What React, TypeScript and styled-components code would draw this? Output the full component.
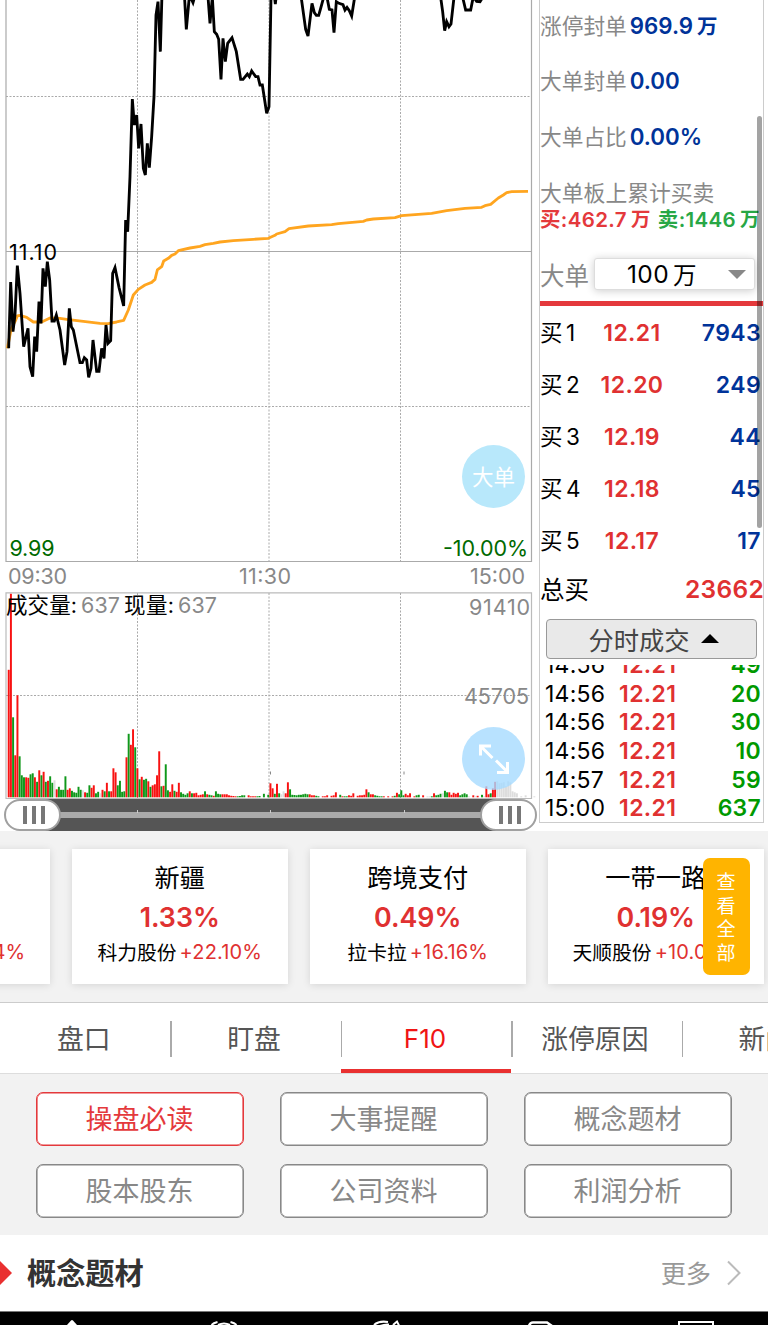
import React from "react";
import styled, { createGlobalStyle } from "styled-components";

const GlobalStyle = createGlobalStyle`
  * { box-sizing: border-box; }
  body {
    margin: 0;
    background: #fff;
    font-family: Inter, "Noto Sans CJK SC", sans-serif;
    color: #000;
    text-autospace: no-autospace;
  }
`;

const Page = styled.div`
  width: 768px;
  height: 1325px;
  overflow: hidden;
  display: flex;
  flex-direction: column;
  background: #fff;
`;

const Quote = styled.section`
  display: flex;
  height: 831px;
  flex: none;
`;

const ChartColumn = styled.div`
  width: 539px;
  flex: none;
  position: relative;
  display: flex;
  flex-direction: column;
`;

const Chart = styled.svg`
  display: block;
  flex: none;
  font-family: Inter, sans-serif;
`;

const RoundButton = styled.button<{ $top: number; $color: string }>`
  position: absolute;
  left: 462px;
  top: ${(p) => p.$top}px;
  width: 63px;
  height: 63px;
  padding: 0 0 2px;
  border: 0;
  border-radius: 50%;
  background: ${(p) => p.$color};
  color: #fff;
  font: 400 21.5px Inter, "Noto Sans CJK SC", sans-serif;
  display: flex;
  align-items: center;
  justify-content: center;
`;

const RangeBar = styled.div`
  height: 32px;
  margin: 0 2px 0 4px;
  background: linear-gradient(#555 13px, #aaa 13px, #aaa 19px, #555 19px) 28px 0 / 477px 32px no-repeat;
  display: flex;
  justify-content: space-between;
  position: relative;
`;

const Handle = styled.span`
  width: 57px;
  height: 32px;
  border: 2px solid #a0a0a0;
  border-radius: 16px;
  background: #fff;
  display: flex;
  align-items: center;
  justify-content: center;
  gap: 5px;
  padding-left: 3px;
`;

const Grip = styled.i`
  width: 4px;
  height: 18px;
  background: #777;
`;

const Tick = styled.i<{ $left: number }>`
  position: absolute;
  left: ${(p) => p.$left}px;
  top: 11px;
  width: 1px;
  height: 3px;
  background: #ccc;
`;

const Panel = styled.aside`
  position: relative;
  width: 225px;
  height: 823px;
  border: 1px solid #ccc;
  border-top: 0;
  display: flex;
  flex-direction: column;
  white-space: nowrap;
`;

const InfoRow = styled.div`
  height: 56px;
  display: flex;
  align-items: center;
  gap: 3px;
  flex: none;
  padding-bottom: 3px;
  font-size: 21.7px;
  color: #888;
`;

const FirstInfo = styled(InfoRow)`
  height: 53px;
  padding-bottom: 4px;
`;

const InfoValue = styled.b`
  color: #039;
  font-weight: 600;
  font-size: 22.3px;
  display: flex;
  align-items: center;
  padding-top: 2px;
`;

const Unit = styled.span<{ $size?: number }>`
  font-size: ${(p) => p.$size ?? 20.5}px;
  margin-left: 4px;
  margin-top: -1px;
`;

const TradeTitle = styled.div`
  height: 26px;
  line-height: 26px;
  margin-top: 15px;
  flex: none;
  font-size: 21.8px;
  color: #888;
`;

const TradeSums = styled.div`
  height: 26px;
  flex: none;
  display: flex;
  align-items: center;
  gap: 7px;
  padding-bottom: 2px;
  font-size: 20.5px;
  letter-spacing: 0.35px;
  font-weight: 600;
`;

const Sum = styled.span<{ $color: string }>`
  display: flex;
  align-items: center;
  color: ${(p) => p.$color};
`;

const FilterRow = styled.div`
  height: 69px;
  flex: none;
  display: flex;
  align-items: center;
  padding-top: 15px;
  font-size: 24.5px;
  color: #888;
`;

const Select = styled.div`
  width: 161px;
  height: 32px;
  margin-left: 5px;
  border: 1px solid #ddd;
  border-radius: 3px;
  box-shadow: 0 1px 8px rgba(0, 0, 0, 0.2);
  background: #fff;
  color: #000;
  display: flex;
  align-items: center;
  padding: 0 8px 0 32px;
  font-size: 24.5px;
  letter-spacing: 0.4px;
`;

const Arrow = styled.i<{ $up?: boolean }>`
  width: 0;
  height: 0;
  border: 9px solid transparent;
  ${(p) =>
    p.$up
      ? "border-top: 0; border-bottom-color: #000; margin-left: 11px;"
      : "border-bottom: 0; border-top-color: #888; margin-left: auto;"}
`;

const RedRule = styled.hr`
  width: 100%;
  height: 5px;
  margin: 0 0 1px;
  border: 0;
  flex: none;
  background: #e4393c;
`;

const BidRow = styled.div`
  height: 52px;
  flex: none;
  display: grid;
  grid-template-columns: 50px 84px 1fr;
  align-items: center;
  padding: 0 2px 1px 0;
  font-size: 23px;
  letter-spacing: 0.4px;
  font-weight: 600;
`;

const BidLabel = styled.span`
  font-weight: 400;
  font-size: 22.5px;
  display: flex;
  align-items: center;
  gap: 3px;
`;

const BidSide = styled.span`
  margin-top: -3px;
`;

const Price = styled.span`
  color: #e03131;
  text-align: center;
`;

const Volume = styled.span`
  color: #039;
  text-align: right;
`;

const TotalRow = styled.div`
  height: 45px;
  flex: none;
  display: flex;
  align-items: center;
  justify-content: space-between;
  padding-bottom: 2px;
  font-size: 24.5px;
`;

const TotalValue = styled.b`
  color: #e03131;
  font-weight: 600;
  letter-spacing: 0.3px;
  margin-right: -1px;
`;

const TradesButton = styled.button`
  width: 211px;
  height: 40px;
  flex: none;
  margin: 7px 0 6px 6px;
  padding: 0 0 1px 4px;
  border: 1px solid #999;
  border-radius: 4px;
  background: #e9e9e9;
  color: #444;
  font: 400 25.3px Inter, "Noto Sans CJK SC", sans-serif;
  display: flex;
  align-items: center;
  justify-content: center;
`;

const Trades = styled.div`
  flex: 1;
  min-height: 0;
  overflow: hidden;
  display: flex;
  flex-direction: column;
  justify-content: flex-end;
`;

const TradeRow = styled.div`
  height: 28.7px;
  flex: none;
  display: grid;
  grid-template-columns: 74px 70px 1fr;
  align-items: center;
  padding: 1px 2px 0 5px;
  font-size: 23px;
  letter-spacing: 0.25px;
`;

const TradeVolume = styled.span`
  color: #090;
  font-weight: 600;
  text-align: right;
`;

const TradePrice = styled.span`
  color: #e03131;
  font-weight: 600;
  letter-spacing: 0.4px;
`;

const ScrollThumb = styled.div`
  position: absolute;
  left: 217px;
  top: 116px;
  width: 5px;
  height: 412px;
  border-radius: 3px;
  background: rgba(0, 0, 0, 0.36);
`;

const Sectors = styled.section`
  position: relative;
  height: 171px;
  flex: none;
  background: #f2f2f2;
  overflow: hidden;
  padding: 18px 0 0;
  display: flex;
  gap: 21.7px;
`;

const SectorCard = styled.article`
  width: 216.3px;
  height: 135px;
  flex: none;
  background: #fff;
  box-shadow: 0 1px 8px rgba(0, 0, 0, 0.12);
  display: flex;
  flex-direction: column;
  align-items: center;
  white-space: nowrap;
  &:first-child { margin-left: -166.4px; }
`;

const SectorName = styled.h3`
  margin: 10px 0 0;
  height: 39px;
  line-height: 39px;
  font-size: 25.2px;
  font-weight: 400;
`;

const SectorChange = styled.strong`
  height: 38px;
  line-height: 38px;
  font-size: 26.8px;
  font-weight: 600;
  color: #e03131;
`;

const SectorStock = styled.span`
  height: 30px;
  display: flex;
  align-items: center;
  gap: 3px;
  font-size: 19.8px;
`;

const StockGain = styled.span`
  color: #e03131;
  font-size: 20px;
  letter-spacing: 0.15px;
  padding-top: 1px;
`;

const ViewAll = styled.button`
  position: absolute;
  left: 703px;
  top: 27px;
  width: 47px;
  height: 117px;
  padding: 0 14px 1px 13px;
  border: 0;
  border-radius: 7px;
  background: #ffb400;
  color: #fff;
  font: 400 19px/23.5px "Noto Sans CJK SC", sans-serif;
`;

const Tabs = styled.nav`
  height: 72px;
  flex: none;
  display: flex;
  border-top: 1px solid #ccc;
  border-bottom: 1px solid #ddd;
  overflow: hidden;
`;

const Tab = styled.a<{ $active?: boolean }>`
  width: 170.4px;
  height: 70px;
  flex: none;
  display: flex;
  align-items: center;
  justify-content: center;
  position: relative;
  padding: ${(p) => (p.$active ? "1px 2px 0 0" : "0 3px 1px 0")};
  font-size: ${(p) => (p.$active ? 26 : 26.8)}px;
  color: ${(p) => (p.$active ? "#f01414" : "#555")};
  ${(p) => p.$active && "box-shadow: inset 0 -4px #e93030;"}
  &:not(:first-child)::before {
    content: "";
    position: absolute;
    left: 0;
    top: 18px;
    width: 1.5px;
    height: 36px;
    background: #aaa;
  }
`;

const Topics = styled.section`
  height: 161px;
  flex: none;
  background: #f2f2f2;
  padding: 18px 36px;
  display: grid;
  grid-template-columns: repeat(3, 208px);
  grid-auto-rows: 53.5px;
  gap: 18.5px 36px;
`;

const Topic = styled.button<{ $active?: boolean }>`
  border: 1px solid ${(p) => (p.$active ? "#e4393c" : "#888")};
  box-shadow: inset 0 0 0 0.6px ${(p) => (p.$active ? "#e4393c" : "#888")};
  border-radius: 7px;
  background: #fff;
  color: ${(p) => (p.$active ? "#e4393c" : "#888")};
  font: 400 27px Inter, "Noto Sans CJK SC", sans-serif;
  padding: 0 1px 2px 0;
`;

const Heading = styled.header`
  height: 76px;
  flex: none;
  display: flex;
  align-items: center;
`;

const Marker = styled.i`
  width: 0;
  height: 0;
  border: 12.5px solid transparent;
  border-left-color: #e93030;
  border-right: 0;
`;

const HeadingText = styled.h2`
  margin: 0 auto 4px 15px;
  font-size: 29.2px;
  font-weight: 700;
  color: #333;
`;

const More = styled.span`
  font-size: 25.2px;
  color: #999;
  margin: 0 16px 3px 0;
`;

const Chevron = styled.svg`
  margin-right: 27px;
`;

const BottomBar = styled.footer`
  height: 14px;
  flex: none;
  background: #000;
  border-top: 1px solid #777;
`;

const BarIcons = styled.svg`
  display: block;
`;

const pricePaths = [
  "26,1045 32,846 39,995 45,945 52,797 60,880 71,1040 77,1015 84,985 90,1100 98,1130 104,1010 110,1055 117,905 123,970 129,805 136,860 142,785 149,840 156,963 163,963 169,945 180,990 194,1095 201,1055 208,925 214,980 220,990 240,1088 247,1088 253,1073 260,1080 266,1132 273,1105 279,1020 290,1114 297,1114 305,1045 312,1075 318,975 324,1030 332,1022 338,820 345,803 357,862 371,918 377,660 383,695 390,530 397,297 403,375 410,345 416,445 423,372 430,505 436,525 442,430 448,503 455,410 462,290 468,45 474,5 481,155 486,-20",
  "553,-20 559,88 567,0 573,-5 579,8 584,-10",
  "624,-10 630,70 637,-8 643,95 650,103 656,118 663,238 669,115 676,185 683,130 696,113 709,155 722,238 729,238 742,222 748,230 755,213 767,230 774,230 780,255 787,255 800,340 807,320 813,-10",
  "823,-15 826,12 829,-15",
  "904,-5 917,88 924,108 936,10 943,38 949,46 956,46 962,25 971,-8",
  "981,-8 988,28 996,30 1002,98 1009,5 1017,10 1029,14 1035,30 1041,22 1048,32 1055,48 1064,-8",
  "1322,-8 1328,35 1334,92 1340,65 1347,80 1353,72 1362,-8",
  "1388,-8 1397,30 1412,30 1419,-5 1425,-3 1430,4 1440,5 1447,-6",
];

const averagePath =
  "22,1045 26,1025 34,985 45,965 52,948 60,946 80,952 100,966 125,966 150,954 180,955 200,958 250,964 300,970 325,971 350,966 371,961 385,930 400,885 415,868 435,855 455,847 465,838 472,810 485,800 491,783 505,775 515,766 525,762 535,752 570,744 600,739 615,734 640,730 660,726 700,722 760,718 805,715 825,706 830,702 855,695 867,686 925,678 995,674 1015,671 1090,664 1100,660 1120,657 1185,653 1205,647 1295,640 1340,632 1395,625 1445,622 1455,617 1472,613 1495,594 1510,585 1520,578 1535,575 1584,574";

/* One entry per minute: r = up, g = down, n = flat, followed by the bar height. */
const volumes =
  "r127.5 r203.5 g80 r42 r102 g41 g22 g20 r20 r19.5 g23 g24 r20 g15.5 r27 g22 r25.5 g15.5 r16.5 g21 g14.5 n17 r8 g10.5 g7.5 g7.5 g21 r7.5 r9 g6.5 g5 g4.5 g10.5 g7.5 n7 r5 g4.5 g12 r9.5 r12 g4 g5.5 n4 r7.5 g6 r14.5 g6 r6 r29 r25 g12 g16.5 g5.5 g6 r40 g63.5 r52.5 r68 g50 r29 g18 r20.5 g17.5 g18.5 r16 g10.5 r12 r13 r22 r46 g11 r11.5 g33 g7 r5.5 r13 g6.5 r5.5 r14.5 g5 g3.5 g2.5 g4 r6 g4 r4 r4.5 r2 r2.5 r3 g6 r3 g2.5 g2 r1.5 g6 g3.5 g3 r3 r3 r3 r2 r1.5 r1.3 r1 g1 g1.3 g2 g2 n0 r2 r1 r1 r1 g1 g1.3 n0 g3.5 n0 g2.5 " +
  "r14 r9 g3.5 r13.5 g4 n3 n6 r4 r15 g8 g2.5 g2.3 g2 g2.5 g2.5 g3 g3.5 g3 r3 r2 r2 g1.5 g1 n0 r1 r1 r2 n0 r1.5 r2 r5 n0 g2.5 r1 g1 g1 r2 r1.5 r4 n0 r1.5 r2 r2 r2.5 r8 g5 r3 r3 g2 g1.5 g1 g1 r1 n0 r1 n0 r1 g1.5 r4.5 g3 g7 g2 r3.5 r2 r4 n0 r1 g2 g2.5 n0 r2 n0 n1 n1 g1 r4 g2 g2.5 g3.5 n4 g6.5 g5 r5 r2.5 r4.5 r3.5 r4.5 g2 g3 g4 g3 n1 n0 r2 n1 r1.5 n0 g2.5 n1 r11 r3 g4 r9 r15.5 n16 n14 n14.5 n15 n11 n16 n15 n6 n5 n4 n0 n1 n0 n2 n0 n0 n0 n1";

const barColors: Record<string, string> = { r: "#f81212", g: "#0f981a", n: "#ddd" };

const bids = [
  ["1", "12.21", "7943"],
  ["2", "12.20", "249"],
  ["3", "12.19", "44"],
  ["4", "12.18", "45"],
  ["5", "12.17", "17"],
];

const trades = [
  ["14:56", "49"],
  ["14:56", "20"],
  ["14:56", "30"],
  ["14:56", "10"],
  ["14:57", "59"],
  ["15:00", "637"],
];

const sectors = [
  ["", "", "", "+10.04%"],
  ["新疆", "1.33%", "科力股份", "+22.10%"],
  ["跨境支付", "0.49%", "拉卡拉", "+16.16%"],
  ["一带一路", "0.19%", "天顺股份", "+10.02%"],
];

function PriceChart() {
  return (
    <Chart width="539" height="592" viewBox="0 0 539 592">
      <g stroke="#aaa" strokeDasharray="2 1.5">
        <path d="M6 96.5H531M6 406.5H531M137.5 0V561M269 0V561M400.5 0V561" />
      </g>
      <path d="M6 0V561.5H531.5V0M6 251.5H531" fill="none" stroke="#aaa" strokeWidth="1.2" />
      <g transform="scale(.33333)" fill="none" strokeWidth="8.5">
        <polyline points={averagePath} stroke="#ffa51f" strokeLinejoin="round" />
        {pricePaths.map((points) => (
          <polyline key={points} points={points} stroke="#000" strokeMiterlimit="4" />
        ))}
      </g>
      <g fontSize="21.5">
        <text x="9" y="260" textLength="48">11.10</text>
        <text x="9.5" y="555.5" textLength="45" fill="#006a00">9.99</text>
        <text x="443" y="555.5" textLength="85" fill="#006a00">-10.00%</text>
        <g fill="#888">
          <text x="8" y="583.5" textLength="59">09:30</text>
          <text x="239" y="583.5" textLength="52">11:30</text>
          <text x="470" y="583.5" textLength="55">15:00</text>
        </g>
      </g>
    </Chart>
  );
}

function VolumeChart() {
  return (
    <Chart width="539" height="207" viewBox="0 592 539 207">
      <path d="M6 798.5V592.8H531.5V798.5Z" fill="none" stroke="#bbb" strokeWidth="1.2" />
      <path
        d="M6 695.5H531M137.5 593V798M269 593V798M400.5 593V798"
        stroke="#aaa"
        strokeDasharray="2 1.5"
      />
      <path d="M270.5 771.5v3M404 771.5v3" stroke="#888" />
      {volumes.split(" ").map((bar, i) => {
        const height = Number(bar.slice(1));
        return (
          <rect
            key={i}
            x={7.75 + i * 2.181}
            y={797.3 - height}
            width="1.95"
            height={height}
            fill={barColors[bar[0]]}
          />
        );
      })}
      <g fontSize="21.5" fontFamily='Inter, "Noto Sans CJK SC", sans-serif'>
        <text x="6" y="613" textLength="71">成交量:</text>
        <text x="81" y="613" textLength="39" fill="#888">637</text>
        <text x="124" y="613" textLength="50">现量:</text>
        <text x="178" y="613" textLength="39" fill="#888">637</text>
        <text x="469" y="615" textLength="61" fill="#888">91410</text>
        <text x="464" y="703.5" textLength="65" fill="#888">45705</text>
      </g>
    </Chart>
  );
}

function RangeHandle() {
  return (
    <Handle>
      <Grip />
      <Grip />
      <Grip />
    </Handle>
  );
}

export default function App() {
  return (
    <Page>
      <GlobalStyle />
      <Quote>
        <ChartColumn>
          <PriceChart />
          <VolumeChart />
          <RangeBar>
            <Tick $left={133} />
            <Tick $left={266} />
            <Tick $left={400} />
            <RangeHandle />
            <RangeHandle />
          </RangeBar>
          <RoundButton $top={445} $color="#b8e8fb">大单</RoundButton>
          <RoundButton $top={727} $color="rgba(166, 219, 255, 0.8)">
            <svg width="32" height="32" viewBox="0 0 32 32" fill="none" stroke="#fff" strokeWidth="3">
              <path d="M2.5 13.5V4H13M3 4.5 14.5 16M18 18.5 29 29.5M19 30.5H29.5V20" />
            </svg>
          </RoundButton>
        </ChartColumn>
        <Panel>
          <FirstInfo>
            涨停封单<InfoValue>969.9<Unit>万</Unit></InfoValue>
          </FirstInfo>
          <InfoRow>
            大单封单<InfoValue>0.00</InfoValue>
          </InfoRow>
          <InfoRow>
            大单占比<InfoValue>0.00%</InfoValue>
          </InfoRow>
          <TradeTitle>大单板上累计买卖</TradeTitle>
          <TradeSums>
            <Sum $color="#e4393c">买:462.7<Unit $size={19.5}>万</Unit></Sum>
            <Sum $color="#28a745">卖:1446<Unit $size={19.5}>万</Unit></Sum>
          </TradeSums>
          <FilterRow>
            大单
            <Select>
              100<Unit $size={23.5}>万</Unit>
              <Arrow />
            </Select>
          </FilterRow>
          <RedRule />
          {bids.map(([level, price, volume]) => (
            <BidRow key={level}>
              <BidLabel>
                <BidSide>买</BidSide>
                <span>{level}</span>
              </BidLabel>
              <Price>{price}</Price>
              <Volume>{volume}</Volume>
            </BidRow>
          ))}
          <TotalRow>
            总买<TotalValue>23662</TotalValue>
          </TotalRow>
          <TradesButton>
            分时成交
            <Arrow $up />
          </TradesButton>
          <Trades>
            {trades.map(([time, volume], i) => (
              <TradeRow key={i}>
                <span>{time}</span>
                <TradePrice>12.21</TradePrice>
                <TradeVolume>{volume}</TradeVolume>
              </TradeRow>
            ))}
          </Trades>
          <ScrollThumb />
        </Panel>
      </Quote>
      <Sectors>
        {sectors.map(([name, change, stock, gain], i) => (
          <SectorCard key={i}>
            <SectorName>{name}</SectorName>
            <SectorChange>{change}</SectorChange>
            <SectorStock>
              {stock || "\u3000\u3000\u3000\u3000"}
              <StockGain>{gain}</StockGain>
            </SectorStock>
          </SectorCard>
        ))}
        <ViewAll>查看全部</ViewAll>
      </Sectors>
      <Tabs>
        <Tab>盘口</Tab>
        <Tab>盯盘</Tab>
        <Tab $active>F10</Tab>
        <Tab>涨停原因</Tab>
        <Tab>新闻</Tab>
      </Tabs>
      <Topics>
        <Topic $active>操盘必读</Topic>
        <Topic>大事提醒</Topic>
        <Topic>概念题材</Topic>
        <Topic>股本股东</Topic>
        <Topic>公司资料</Topic>
        <Topic>利润分析</Topic>
      </Topics>
      <Heading>
        <Marker />
        <HeadingText>概念题材</HeadingText>
        <More>更多</More>
        <Chevron width="14" height="26" viewBox="0 0 14 26" fill="none" stroke="#bbb" strokeWidth="2">
          <path d="M1 1.5 12.5 13 1 24.5" />
        </Chevron>
      </Heading>
      <BottomBar>
        <BarIcons width="768" height="13" viewBox="0 1312 768 13" fill="none" stroke="#fff" strokeWidth="2">
          <path d="M67 1325 71 1320.5Q72 1319.5 73 1320.5L77 1325Z" fill="#fff" stroke="none" />
          <path d="M211.5 1325q2-2 6-3M230.5 1322q4 1 6 3M218 1325q6-3 12 0" />
          <path d="M374 1325q5-4.5 14-3M380 1326q5-2 9-1.5M393 1325l4-3.5 2 4" />
          <path d="M529 1326q1-3.5 4-3.5h14l5 3.5" strokeWidth="2.6" />
          <path d="M679 1326v-4h34v4" />
        </BarIcons>
      </BottomBar>
    </Page>
  );
}
